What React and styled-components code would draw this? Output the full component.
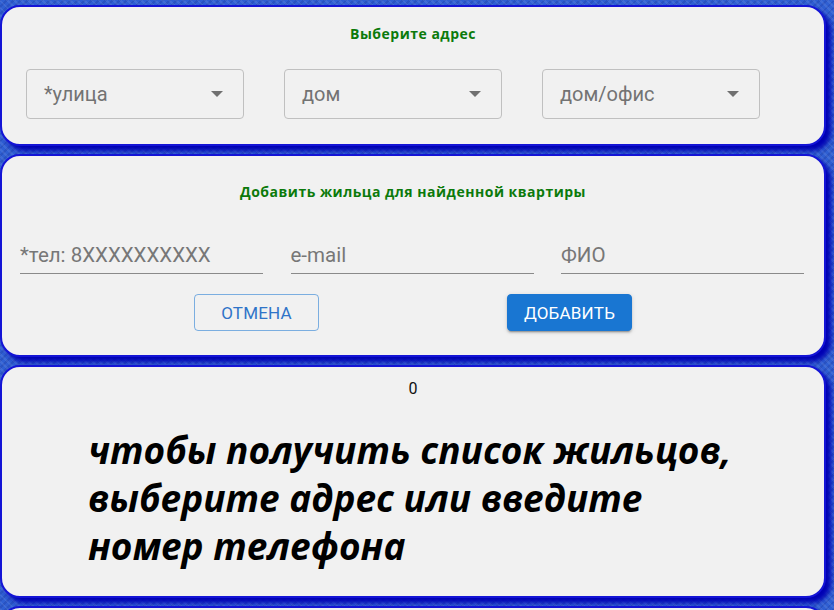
import styled, { createGlobalStyle } from "styled-components";

const GlobalStyle = createGlobalStyle`
  html, body {
    margin: 0;
    padding: 0;
  }
  body {
    background-color: #2f5fd2;
    background-image: repeating-linear-gradient(
        45deg,
        rgba(255, 255, 255, 0.08) 0 2px,
        transparent 2px 5px
      ),
      repeating-linear-gradient(
        -45deg,
        rgba(0, 0, 80, 0.12) 0 2px,
        transparent 2px 5px
      );
    font-family: Roboto, "Liberation Sans", sans-serif;
    height: 610px;
    overflow: hidden;
  }
`;

const Page = styled.div`
  display: flex;
  flex-direction: column;
  gap: 8px;
  padding: 5px 8px 0 0;
`;

const Card = styled.section`
  background: #f1f1f1;
  border: 2px solid #1414d6;
  border-radius: 20px;
  box-shadow: 5px 5px 5px #0000b4;
  padding: ${(p) => p.$pad || "20px"};
`;

const Title = styled.h3`
  margin: 0;
  text-align: center;
  color: #0b7a0b;
  font-family: "Open Sans", "DejaVu Sans", sans-serif;
  font-size: 14px;
  font-weight: 700;
  letter-spacing: 0.5px;
  line-height: 16px;
`;

const SelectRow = styled.div`
  display: flex;
  gap: 40px;
  margin-top: 27px;
  padding-left: 4px;
`;

const SelectBox = styled.div`
  width: 218px;
  height: 50px;
  box-sizing: border-box;
  border: 1px solid #c0c0c0;
  border-radius: 4px;
  display: flex;
  align-items: center;
  justify-content: space-between;
  padding: 0 20px 0 17px;
  font-size: 20px;
  color: #737373;
`;

const Arrow = () => (
  <svg width="12" height="6" viewBox="0 0 12 6">
    <path d="M0 0 L6 6 L12 0 Z" fill="#707070" />
  </svg>
);

const InputRow = styled.div`
  display: grid;
  grid-template-columns: repeat(3, 243px);
  justify-content: space-between;
  margin-top: 41px;
  padding: 0 20px 0 18px;
`;

const Field = styled.div`
  height: 33px;
  box-sizing: border-box;
  border-bottom: 1px solid #8a8a8a;
  display: flex;
  align-items: center;
  font-size: 20.5px;
  color: #777;
  padding-bottom: 4px;
`;

const ButtonRow = styled.div`
  display: flex;
  justify-content: center;
  gap: 188px;
  margin-top: 20px;
`;

const Button = styled.button`
  width: 125px;
  height: 37px;
  border-radius: 4px;
  font-family: Roboto, "Liberation Sans", sans-serif;
  font-size: 17px;
  letter-spacing: 0.2px;
  text-transform: uppercase;
  cursor: pointer;
  border: 1px solid
    ${(p) => (p.$primary ? "#1976d2" : "rgba(25, 118, 210, 0.55)")};
  background: ${(p) => (p.$primary ? "#1976d2" : "transparent")};
  color: ${(p) => (p.$primary ? "#ffffff" : "#2f74c8")};
  box-shadow: ${(p) =>
    p.$primary
      ? "0 3px 1px -2px rgba(0,0,0,0.2), 0 2px 2px rgba(0,0,0,0.14), 0 1px 5px rgba(0,0,0,0.12)"
      : "none"};
`;

const Count = styled.div`
  text-align: center;
  font-size: 16px;
  line-height: 20px;
  color: #111;
`;

const Hint = styled.p`
  margin: 27px 0 0 66px;
  max-width: 656px;
  font-family: "Open Sans", "Noto Sans", sans-serif;
  font-style: italic;
  font-weight: 700;
  font-size: 37px;
  line-height: 48px;
  color: #000;
`;

export default function App() {
  return (
    <>
      <GlobalStyle />
      <Page>
        <Card $pad="19px 20px 25px">
          <Title>Выберите адрес</Title>
          <SelectRow>
            <SelectBox>
              *улица <Arrow />
            </SelectBox>
            <SelectBox>
              дом <Arrow />
            </SelectBox>
            <SelectBox>
              дом/офис <Arrow />
            </SelectBox>
          </SelectRow>
        </Card>
        <Card $pad="28px 0 24px">
          <Title>Добавить жильца для найденной квартиры</Title>
          <InputRow>
            <Field>*тел: 8XXXXXXXXXX</Field>
            <Field>e-mail</Field>
            <Field>ФИО</Field>
          </InputRow>
          <ButtonRow>
            <Button>Отмена</Button>
            <Button $primary>Добавить</Button>
          </ButtonRow>
        </Card>
        <Card $pad="12px 20px 26px">
          <Count>0</Count>
          <Hint>
            чтобы получить список жильцов, выберите адрес или введите номер
            телефона
          </Hint>
        </Card>
        <Card $pad="20px">
          <Count>&nbsp;</Count>
        </Card>
      </Page>
    </>
  );
}
